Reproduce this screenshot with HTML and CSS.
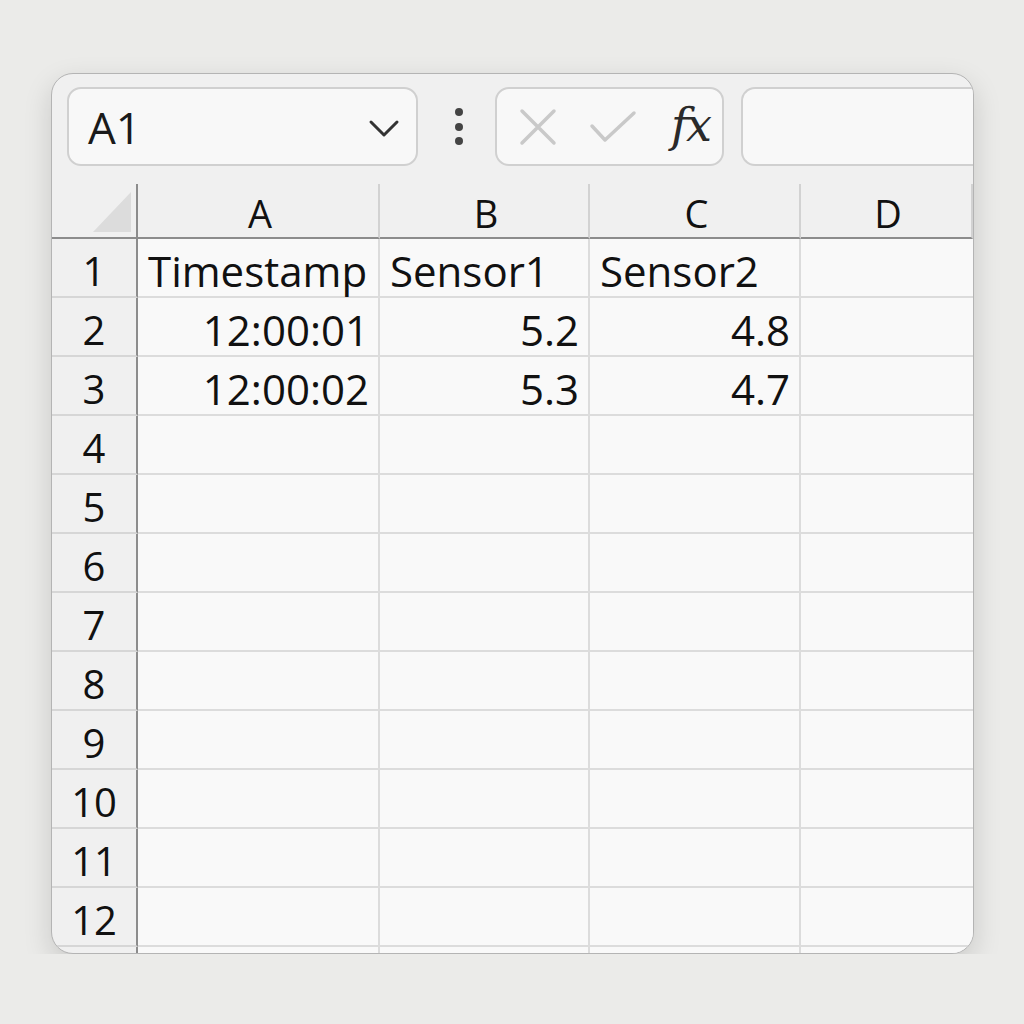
FILE: index.html
```html
<!DOCTYPE html>
<html lang="en">
<head>
  <meta charset="UTF-8">
  <meta name="viewport" content="width=device-width, initial-scale=1.0">
  <title>Sheet</title>
  <link rel="stylesheet" href="styles.css">
</head>
<body>
  <div class="window">
    <div class="toolbar">
      <div class="name-box">
        <span>A1</span>
        <svg class="chevron" width="32" height="20" viewBox="0 0 32 20">
          <path d="M3 3 L16 16 L29 3" fill="none" stroke="#333" stroke-width="3" stroke-linecap="round" stroke-linejoin="round"/>
        </svg>
      </div>
      <svg class="dots" width="12" height="40" viewBox="0 0 12 40">
        <circle cx="6" cy="5" r="4" fill="#444"/>
        <circle cx="6" cy="20" r="4" fill="#444"/>
        <circle cx="6" cy="34" r="4" fill="#444"/>
      </svg>
      <div class="formula-buttons">
        <svg width="38" height="38" viewBox="0 0 38 38">
          <path d="M3 3 L35 35 M35 3 L3 35" stroke="#c9c9c9" stroke-width="3.5" stroke-linecap="round"/>
        </svg>
        <svg width="48" height="34" viewBox="0 0 48 34">
          <path d="M3 16 L16 30 L45 3" fill="none" stroke="#c9c9c9" stroke-width="3.5" stroke-linecap="round" stroke-linejoin="round"/>
        </svg>
        <span class="fx">fx</span>
      </div>
      <div class="formula-input"></div>
    </div>

    <div class="sheet">
      <div class="corner"><div class="tri"></div></div>
      <div class="col-head">A</div>
      <div class="col-head">B</div>
      <div class="col-head">C</div>
      <div class="col-head">D</div>

      <div class="row-head">1</div>
      <div class="cell">Timestamp</div>
      <div class="cell">Sensor1</div>
      <div class="cell">Sensor2</div>
      <div class="cell"></div>

      <div class="row-head">2</div>
      <div class="cell num">12:00:01</div>
      <div class="cell num">5.2</div>
      <div class="cell num">4.8</div>
      <div class="cell"></div>

      <div class="row-head">3</div>
      <div class="cell num">12:00:02</div>
      <div class="cell num">5.3</div>
      <div class="cell num">4.7</div>
      <div class="cell"></div>

      <div class="row-head">4</div>
      <div class="cell"></div><div class="cell"></div><div class="cell"></div><div class="cell"></div>
      <div class="row-head">5</div>
      <div class="cell"></div><div class="cell"></div><div class="cell"></div><div class="cell"></div>
      <div class="row-head">6</div>
      <div class="cell"></div><div class="cell"></div><div class="cell"></div><div class="cell"></div>
      <div class="row-head">7</div>
      <div class="cell"></div><div class="cell"></div><div class="cell"></div><div class="cell"></div>
      <div class="row-head">8</div>
      <div class="cell"></div><div class="cell"></div><div class="cell"></div><div class="cell"></div>
      <div class="row-head">9</div>
      <div class="cell"></div><div class="cell"></div><div class="cell"></div><div class="cell"></div>
      <div class="row-head">10</div>
      <div class="cell"></div><div class="cell"></div><div class="cell"></div><div class="cell"></div>
      <div class="row-head">11</div>
      <div class="cell"></div><div class="cell"></div><div class="cell"></div><div class="cell"></div>
      <div class="row-head">12</div>
      <div class="cell"></div><div class="cell"></div><div class="cell"></div><div class="cell"></div>
      <div class="row-head"></div>
      <div class="cell"></div><div class="cell"></div><div class="cell"></div><div class="cell"></div>
    </div>
  </div>
</body>
</html>
```

FILE: styles.css
```css
body {
  margin: 0;
  padding-top: 73px;
  background-color: #ebebe9;
  font-family: "Open Sans", sans-serif;
  color: #111;
}
.window {
  width: 923px;
  height: 881px;
  margin: 0 0 0 51px;
  box-sizing: border-box;
  border: 1px solid #b4b4b4;
  border-radius: 22px;
  background-color: #f0f0f0;
  overflow: hidden;
  box-shadow: 0 10px 28px rgba(0, 0, 0, 0.15);
}
.toolbar {
  display: flex;
  align-items: center;
  padding: 13px 0 0 15px;
  height: 79px;
  margin-bottom: 18px;
}
.name-box {
  width: 351px;
  height: 79px;
  box-sizing: border-box;
  border: 2px solid #d0d0d0;
  border-radius: 14px;
  background-color: #f8f8f8;
  display: flex;
  align-items: center;
  justify-content: space-between;
  padding: 0 16px 0 19px;
  font-size: 44px;
  color: #1a1a1a;
}
.chevron {
  margin-top: 4px;
}
.dots {
  margin: 0 30px 0 35px;
}
.formula-buttons {
  width: 229px;
  height: 79px;
  box-sizing: border-box;
  border: 2px solid #d0d0d0;
  border-radius: 14px;
  background-color: #f8f8f8;
  display: flex;
  align-items: center;
  padding: 0 12px 0 22px;
  gap: 32px;
}
.fx {
  font-family: "DejaVu Serif", serif;
  font-style: italic;
  font-size: 46px;
  color: #2a2a2a;
  margin-left: auto;
  margin-top: -4px;
  letter-spacing: -2px;
}
.formula-input {
  flex: 1;
  height: 79px;
  margin-left: 17px;
  box-sizing: border-box;
  border: 2px solid #d0d0d0;
  border-right: none;
  border-radius: 14px 0 0 14px;
  background-color: #f8f8f8;
}
.sheet {
  display: grid;
  grid-template-columns: 86px 242px 210px 211px 1fr;
  grid-template-rows: 55px repeat(12, 59px) 20px;
}
.corner {
  border-right: 2px solid #8c8c8c;
  border-bottom: 2px solid #8c8c8c;
  position: relative;
}
.tri {
  position: absolute;
  left: 41px;
  top: 8px;
  width: 38px;
  height: 40px;
  background-color: #dcdcdc;
  clip-path: polygon(100% 0, 100% 100%, 0 100%);
}
.col-head {
  border-right: 2px solid #d2d2d2;
  border-bottom: 2px solid #8c8c8c;
  display: flex;
  align-items: center;
  justify-content: center;
  font-size: 38px;
  padding-top: 4px;
  padding-left: 4px;
}
.col-head:last-of-type {
  border-right: none;
}
.row-head {
  border-right: 2px solid #8c8c8c;
  border-bottom: 2px solid #d6d6d6;
  display: flex;
  align-items: flex-end;
  justify-content: center;
  font-size: 40px;
  line-height: 1;
  padding-bottom: 5px;
  box-sizing: border-box;
}
.cell {
  background-color: #f9f9f9;
  border-right: 2px solid #dcdcdc;
  border-bottom: 2px solid #dcdcdc;
  font-size: 42px;
  line-height: 1;
  padding: 0 9px 4px 10px;
  display: flex;
  align-items: flex-end;
  box-sizing: border-box;
  white-space: nowrap;
}
.cell:nth-child(5n) {
  border-right: none;
}
.num {
  justify-content: flex-end;
}
```
